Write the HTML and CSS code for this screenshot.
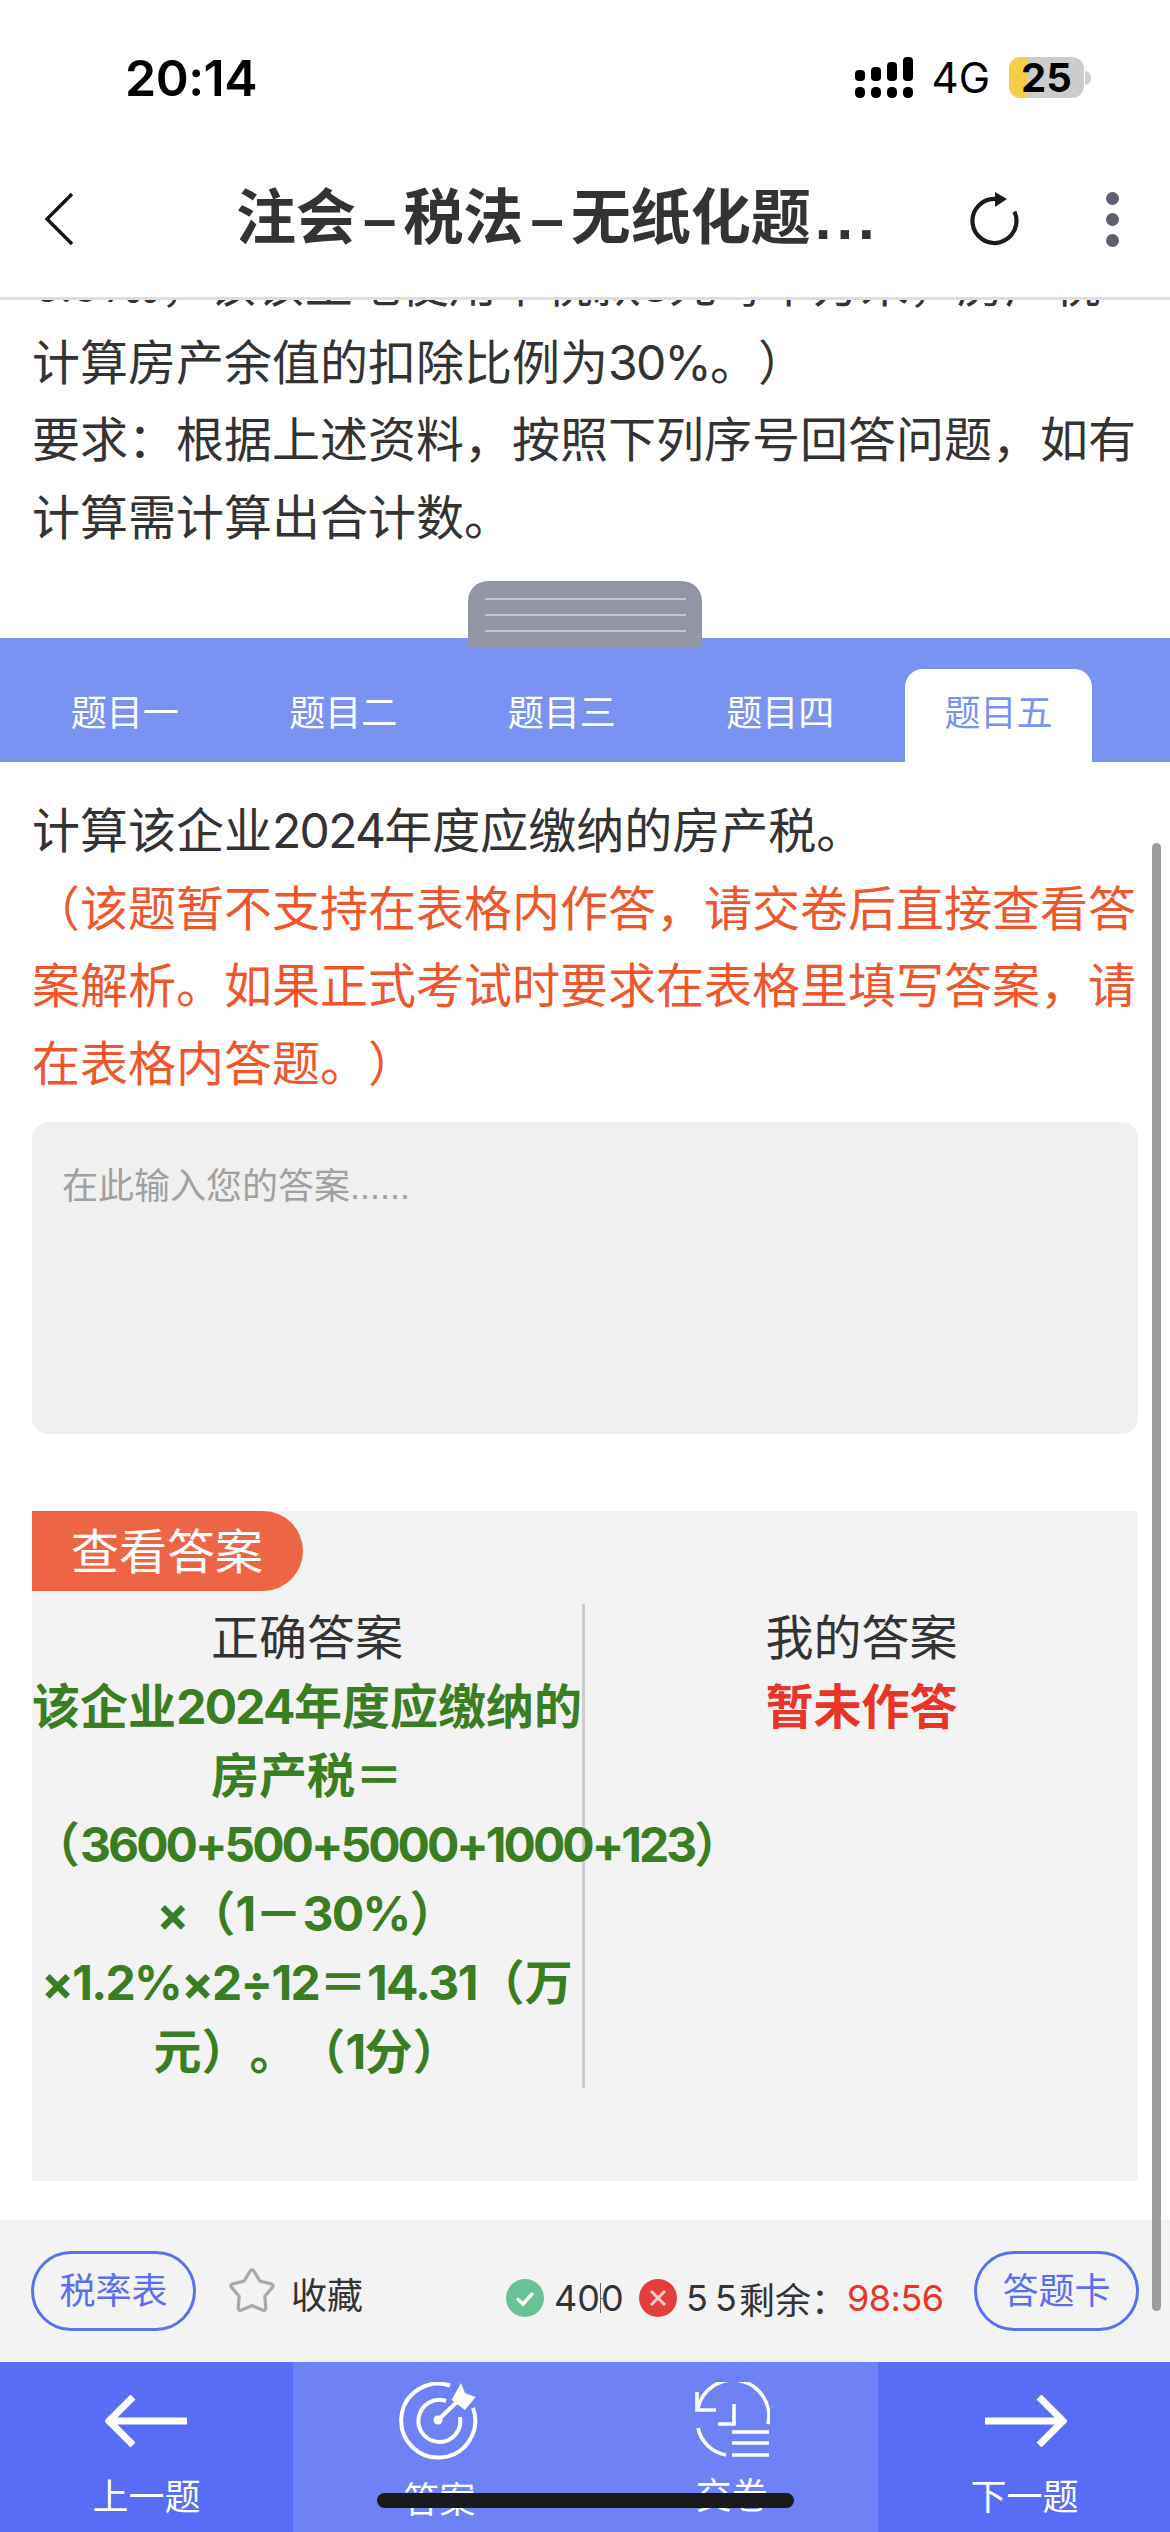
FILE: index.html
```html
<!DOCTYPE html>
<html lang="zh">
<head>
<meta charset="utf-8">
<title>注会–税法–无纸化题</title>
<link rel="stylesheet" href="styles.css">
</head>
<body>
<div class="screen">
  <div class="status">
    <div class="time">20:14</div>
    <div class="status-right">
      <svg class="signal" width="58" height="41" viewBox="0 0 58 41"><g fill="#000"><rect x="0" y="13" width="10" height="11" rx="4"/><rect x="16" y="10" width="10" height="14" rx="4"/><rect x="32" y="5" width="10" height="19" rx="4"/><rect x="48" y="0" width="10" height="24" rx="4"/><rect x="0" y="30" width="10" height="11" rx="4.5"/><rect x="16" y="30" width="10" height="11" rx="4.5"/><rect x="32" y="30" width="10" height="11" rx="4.5"/><rect x="48" y="30" width="10" height="11" rx="4.5"/></g></svg>
      <span class="net">4G</span>
      <div class="battery"><div class="battery-fill"></div><span class="battery-num">25</span></div>
      <div class="battery-tip"></div>
    </div>
  </div>
  <header class="head">
    <svg class="back" width="30" height="54" viewBox="0 0 30 54"><path d="M28 2 3 27l25 25" fill="none" stroke="#111" stroke-width="3.4"/></svg>
    <div class="title">注会<span class="dash">–</span>税法<span class="dash">–</span>无纸化题<span class="more">...</span></div>
    <svg class="refresh" width="52" height="56" viewBox="0 0 52 56"><path d="M27 9A22 22 0 1 0 45.4 21.7" fill="none" stroke="#1c1c1c" stroke-width="4.2"/><path d="M26 2 38 9 26 17Z" fill="#1c1c1c"/></svg>
    <div class="dots"><i></i><i></i><i></i></div>
  </header>
  <section class="stem">
    <p class="stem-text"><span class="nowrap"><span class="n">0.5‰</span>，该该土地使用单税款<span class="n">3</span>元每平方米，房产税</span><br>计算房产余值的扣除比例为<span class="n">30%</span>。）<br>要求：根据上述资料，按照下列序号回答问题，如有计算需计算出合计数。</p>
    <div class="grip"><i></i><i></i><i></i></div>
  </section>
  <nav class="tabs">
    <div class="tab">题目一</div>
    <div class="tab">题目二</div>
    <div class="tab">题目三</div>
    <div class="tab">题目四</div>
    <div class="tab tab-on">题目五</div>
  </nav>
  <main class="body">
    <p class="q">计算该企业<span class="n">2024</span>年度应缴纳的房产税。<br><span class="warn">（该题暂不支持在表格内作答，请交卷后直接查看答案解析。如果正式考试时要求在表格里填写答案，请在表格内答题。）</span></p>
    <div class="input">在此输入您的答案......</div>
    <div class="answer">
      <div class="answer-tag">查看答案</div>
      <div class="cols">
        <div class="col col-left">
          <div>正确答案</div>
          <div class="right-answer">该企业<span class="n">2024</span>年度应缴纳的房产税＝（<span class="n sum">3600+500+5000+1000+123</span>）<span class="n">×</span>（<span class="n">1</span>－<span class="n">30%</span>）<span class="n">×1.2%×2÷12</span>＝<span class="n">14.31</span>（万元）。（<span class="n">1</span>分）</div>
        </div>
        <div class="col">
          <div>我的答案</div>
          <div class="my-answer">暂未作答</div>
        </div>
      </div>
    </div>
  </main>
  <div class="scrollbar"></div>
  <div class="tools">
    <div class="pill">税率表</div>
    <svg class="star" width="52" height="52" viewBox="0 0 48 48"><path d="M22.16 5.98Q24 3 25.84 5.98L31.35 14.9 41.5 17.4Q44.9 18.2 42.65 20.9L35.9 28.9 36.65 39.3Q36.9 42.8 33.7 41.5L24 37.5 14.3 41.5Q11.1 42.8 11.35 39.3L12.1 28.9 5.35 20.9Q3.1 18.2 6.5 17.4L16.65 14.9Z" fill="none" stroke="#a9a9a9" stroke-width="3"/></svg>
    <span class="fav">收藏</span>
    <div class="stats">
      <svg class="stat-icon" width="38" height="38" viewBox="0 0 38 38"><circle cx="19" cy="19" r="19" fill="#69c195"/><path d="M11 19.5 17 25 27 14" fill="none" stroke="#fff" stroke-width="3.4"/></svg>
      <span class="count">40<span class="tick"></span>0</span>
      <svg class="stat-icon" width="38" height="38" viewBox="0 0 38 38"><circle cx="19" cy="19" r="19" fill="#e43d3d"/><path d="M12 12 26 26M26 12 12 26" fill="none" stroke="#f6d0d0" stroke-width="3"/></svg>
      <span class="wrong">5 5</span>
      <span class="left-label">剩余：</span>
      <span class="clock">98:56</span>
    </div>
    <div class="pill pill-end">答题卡</div>
  </div>
  <footer class="nav">
    <div class="nav-item">
      <svg width="84" height="52" viewBox="0 0 84 52"><path d="M28 2 4 26l24 24M4 26h78" fill="none" stroke="#fff" stroke-width="7"/></svg>
      <span>上一题</span>
    </div>
    <div class="nav-item nav-mid">
      <svg width="80" height="80" viewBox="0 0 80 80"><g fill="none" stroke="#fff" stroke-width="4"><path d="M51 3.5A37 37 0 1 0 74 26"/><path d="M47 19A21 21 0 1 0 61 35"/><path d="M39 38 60 18"/></g><circle cx="39" cy="38" r="4.5" fill="#fff"/><path d="M52.6 18 62 1 66 11 76.7 15 66 28Z" fill="#fff"/></svg>
      <span>答案</span>
    </div>
    <div class="nav-item nav-mid">
      <svg width="76" height="76" viewBox="0 0 76 76"><g fill="none" stroke="#fff" stroke-width="3.6"><path d="M4 26A35.5 35.5 0 0 1 74 42"/><path d="M4 46A35 35 0 0 0 32 73"/><path d="M3 10V28H22"/><path d="M40 22V42H24"/><path d="M38 50H75M38 61H75M38 73H75"/></g></svg>
      <span>交卷</span>
    </div>
    <div class="nav-item">
      <svg width="84" height="52" viewBox="0 0 84 52"><path d="M56 2 80 26 56 50M80 26H2" fill="none" stroke="#fff" stroke-width="7"/></svg>
      <span>下一题</span>
    </div>
  </footer>
  <div class="home"></div>
</div>
</body>
</html>
```
FILE: styles.css
```css
* { box-sizing: border-box; }
html, body { margin: 0; padding: 0; background: #fff; }
body { font-family: "Liberation Sans", "Noto Sans CJK SC", sans-serif; color: #333; text-spacing-trim: space-all; }
p { margin: 0; }
.screen { position: relative; width: 1170px; height: 2532px; overflow: hidden; display: flex; flex-direction: column; }
.n { font-family: Inter, "Liberation Sans", sans-serif; letter-spacing: -1.7px; line-height: 0; }
.sum { letter-spacing: -3px; }

.status { height: 157px; flex: none; position: relative; display: flex; justify-content: space-between; align-items: flex-start; padding: 57px 79px 0 125px; }
.time { font-family: Inter, "Liberation Sans", sans-serif; font-weight: 600; font-size: 50px; line-height: 42px; color: #000; letter-spacing: -0.5px; }
.status-right { display: flex; align-items: center; height: 41px; }
.net { font-family: Inter, "Liberation Sans", sans-serif; font-size: 42px; line-height: 41px; color: #000; margin-left: 19px; margin-right: 19px; }
.battery { position: relative; width: 75px; height: 41px; border-radius: 12px; background: #cccccc; display: flex; align-items: center; justify-content: center; }
.battery-fill { position: absolute; left: 0; top: 0; bottom: 0; width: 19px; background: #f5cd47; border-radius: 12px 0 0 12px; }
.battery-num { position: relative; font-family: Inter, "Liberation Sans", sans-serif; font-weight: 700; font-size: 40px; color: #000; line-height: 41px; }
.battery-tip { width: 6px; height: 14px; margin-left: 1px; background: #d0d0d0; border-radius: 0 7px 7px 0; }

.head { height: 143px; flex: none; position: relative; display: flex; align-items: flex-start; justify-content: center; border-bottom: 3px solid #dedede; }
.back { position: absolute; left: 44px; top: 35px; }
.title { position: absolute; left: 236px; top: 22px; font-weight: 700; font-size: 60px; line-height: 80px; color: #333; white-space: nowrap; }
.dash { padding: 0 7px; }
.more { letter-spacing: 5px; margin-left: 4px; }
.refresh { position: absolute; left: 969px; top: 33px; }
.dots { position: absolute; left: 1106px; top: 35px; display: flex; flex-direction: column; gap: 8px; }
.dots i { display: block; width: 13px; height: 13px; border-radius: 50%; background: #5f5f70; }

.stem { height: 338px; flex: none; position: relative; overflow: hidden; }
.stem-text { margin-top: -53px; padding: 0 32px; font-size: 48px; line-height: 77.5px; color: #333; }
.nowrap { white-space: nowrap; }
.grip { position: absolute; left: 468px; top: 281px; width: 234px; height: 57px; background: #9295a3; border-radius: 20px 20px 0 0; display: flex; flex-direction: column; align-items: center; padding-top: 17px; gap: 14px; z-index: 2; }
.grip i { display: block; width: 201px; height: 2px; background: #c3c5d0; }

.tabs { height: 124px; flex: none; background: #7a93f2; display: flex; align-items: flex-end; padding-left: 15.5px; position: relative; }
.tabs::before { content: ""; position: absolute; left: 468px; top: 0; width: 234px; height: 9px; background: #9295a3; }
.tab { width: 218.5px; height: 93px; display: flex; align-items: center; justify-content: center; font-size: 36px; color: #fff; padding-bottom: 11px; }
.tab-on { width: 187px; margin-left: 15.5px; background: #fff; color: #7a93f2; border-radius: 18px 18px 0 0; }

.body { position: relative; height: 1458px; flex: none; padding: 31px 32px 0; overflow: hidden; }
.q { font-size: 48px; line-height: 77.5px; color: #333; }
.warn { color: #f0562c; }
.input { height: 312px; margin-top: 19px; background: #f0f0f0; border-radius: 16px; padding: 43px 30px; font-size: 36px; line-height: 44px; color: #a0a0a0; }
.answer { margin-top: 77px; height: 670px; background: #f3f3f3; position: relative; }
.answer-tag { width: 271px; height: 80px; background: #ee6545; color: #fff; border-radius: 0 40px 40px 0; font-size: 48px; line-height: 84px; padding-left: 39px; }
.cols { display: flex; margin-top: 13px; }
.col { flex: 1; text-align: center; font-size: 48px; line-height: 69px; color: #333; min-width: 0; height: 484px; }
.col-left { flex: none; width: 553px; border-right: 3px solid #cccccc; }
.right-answer { font-weight: 700; color: #3a7d22; }
.my-answer { font-weight: 700; color: #e8352a; }
.scrollbar { position: absolute; left: 1152px; top: 843px; width: 9px; height: 1468px; background: #9c9c9c; border-radius: 5px; z-index: 3; }

.tools { height: 142px; flex: none; background: #f3f3f3; display: flex; align-items: center; padding: 0 31px; position: relative; }
.pill { flex: none; width: 165px; height: 80px; border: 3px solid #5a70f0; border-radius: 40px; font-size: 36px; line-height: 76px; text-align: center; color: #5a70f0; }
.pill-end { margin-left: auto; }
.star { flex: none; margin-left: 30px; }
.fav { flex: none; font-size: 36px; margin-left: 13px; margin-top: 4px; color: #333; white-space: nowrap; }
.stats { display: flex; align-items: center; margin-left: 143px; margin-top: 14px; font-size: 36px; color: #333; flex: none; white-space: nowrap; }
.stat-icon { flex: none; }
.count, .wrong, .clock { font-family: Inter, "Liberation Sans", sans-serif; }
.count { margin-left: 10px; width: 85px; }
.tick { display: inline-block; position: relative; width: 1px; height: 30px; background: #666; vertical-align: -2px; }
.tick::after { content: ""; position: absolute; left: 1px; top: 15px; width: 4px; height: 1px; background: #666; }
.wrong { margin-left: 9px; width: 54px; word-spacing: -3px; }
.left-label { width: 108px; margin-left: -1px; }
.clock { color: #e8352a; letter-spacing: -0.5px; }

.nav { height: 170px; flex: none; display: flex; background: #586cf6; }
.nav-item { width: 293px; flex: none; display: flex; flex-direction: column; align-items: center; color: #fff; font-size: 36px; line-height: 44px; padding-top: 33px; gap: 29px; }
.nav-mid { background: #6e81f5; padding-top: 20px; gap: 17px; width: 292.5px; }
.home { position: absolute; left: 377px; top: 2493px; width: 417px; height: 15px; border-radius: 8px; background: #1a1a1a; }
```
